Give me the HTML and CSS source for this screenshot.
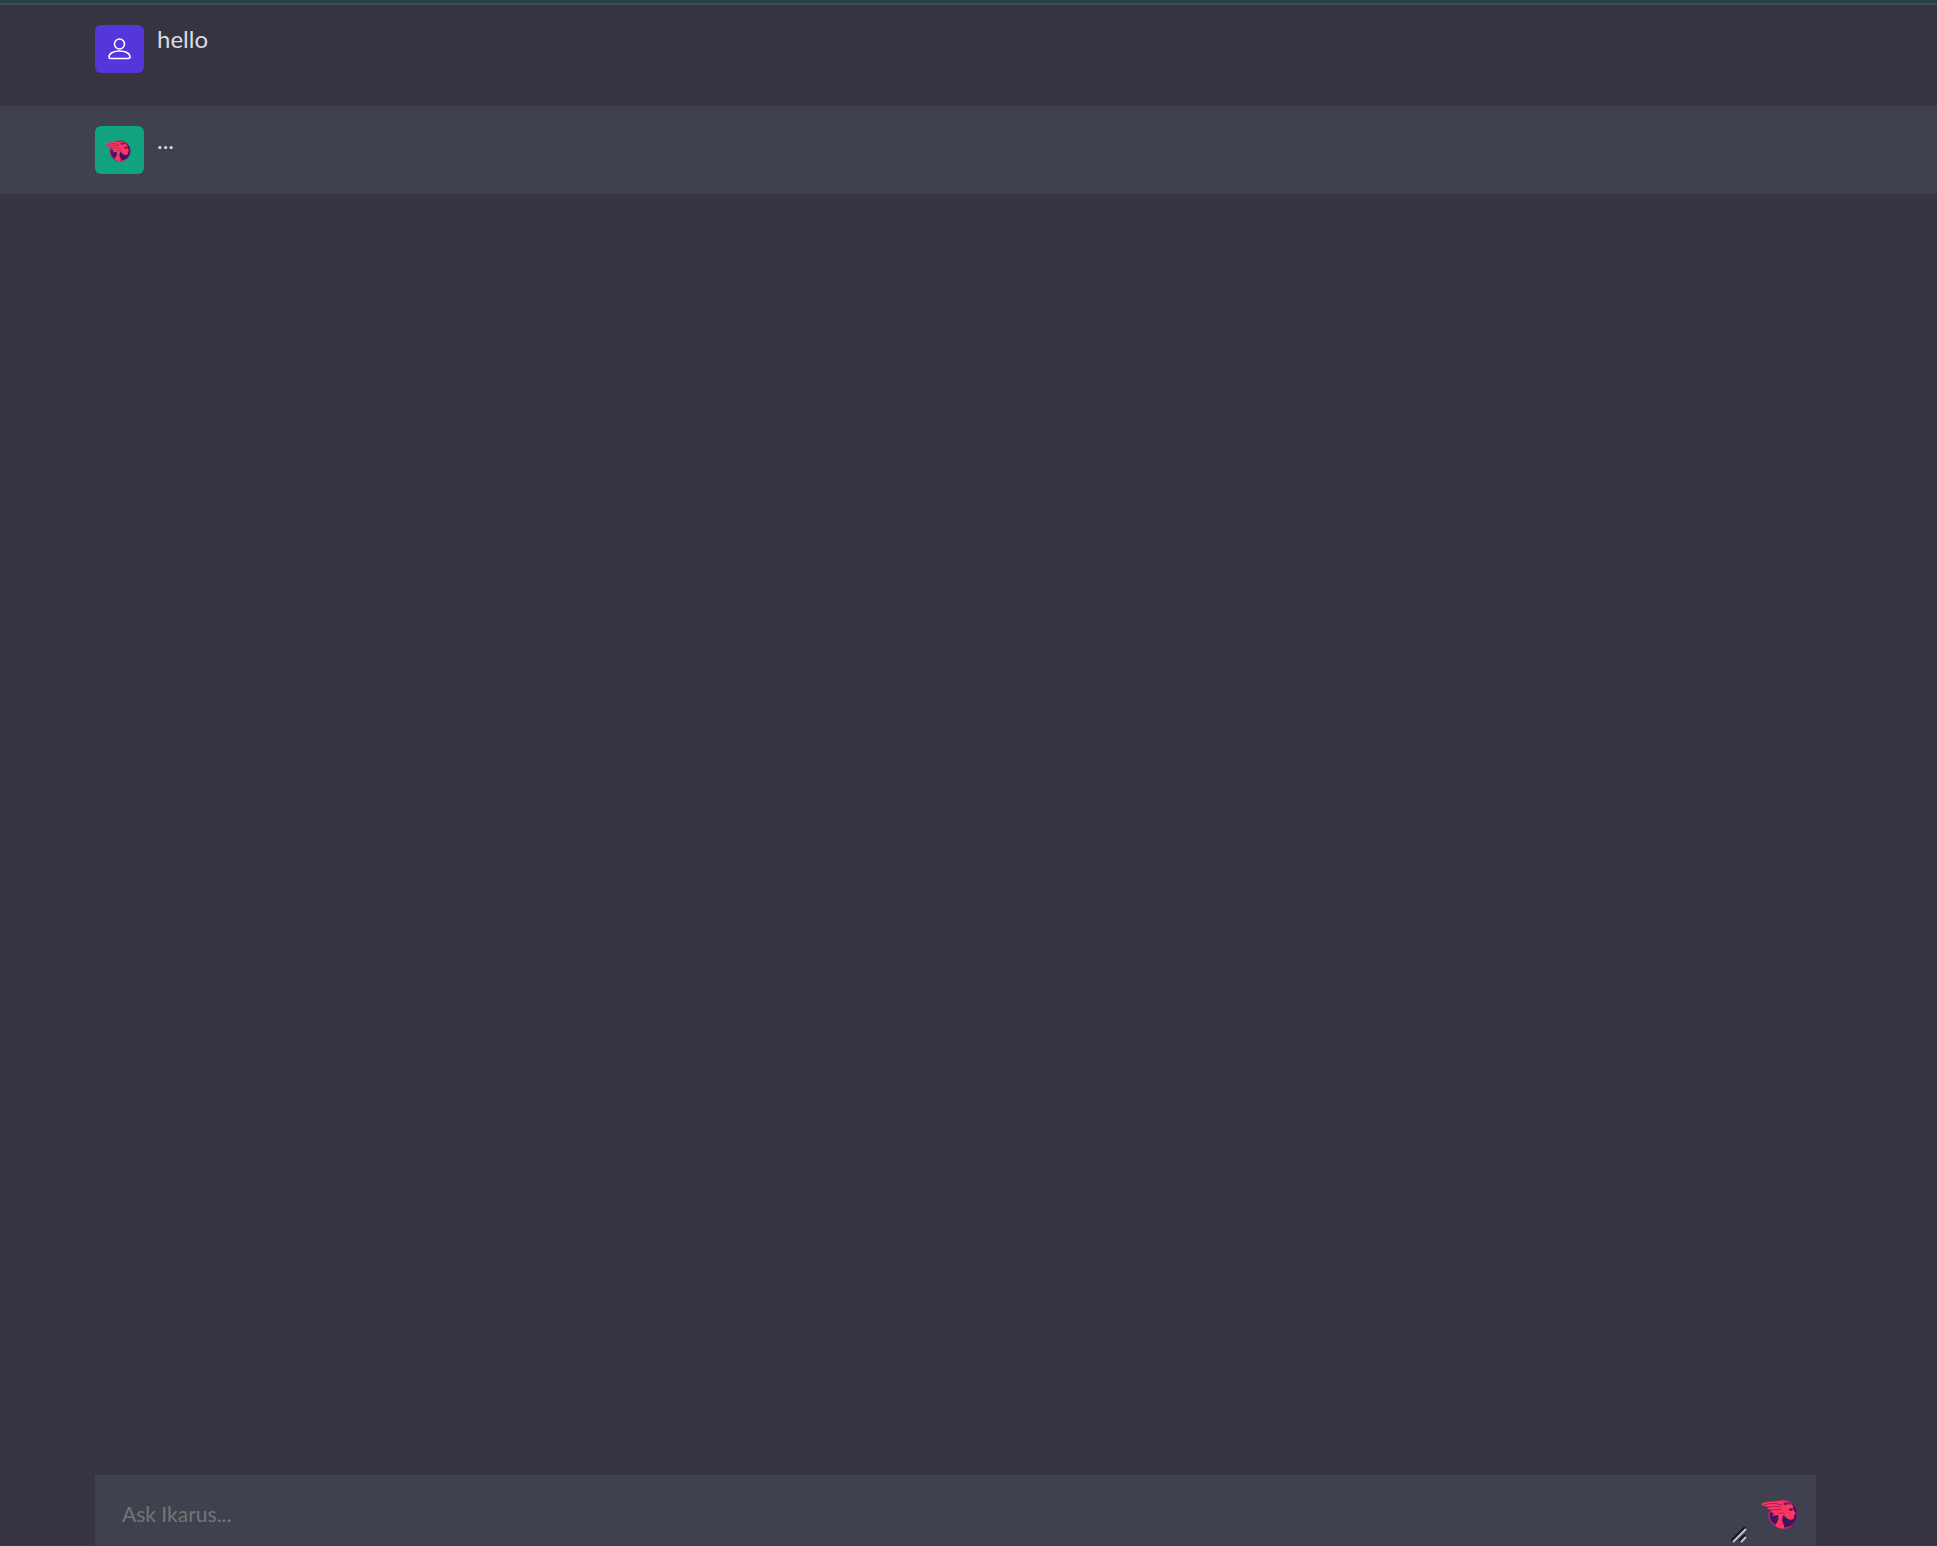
FILE: index.html
```html
<!DOCTYPE html>
<html lang="en">
<head>
<meta charset="utf-8">
<meta name="viewport" content="width=device-width, initial-scale=1">
<title>Ikarus</title>
<link rel="stylesheet" href="styles.css">
</head>
<body>
<svg class="sprite" aria-hidden="true">
  <symbol id="ikarus" viewBox="0 0 38 34">
    <circle cx="22" cy="17" r="14.500" fill="#3f1560" stroke="#8a2460" stroke-width="1"/>
    <path d="M8 15a14.500 14.500 0 0 0 22 14" fill="none" stroke="#e03060" stroke-width="1"/>
    <path d="M0 7C5 4 11 5 17 4c7-2 13 0 15 5l.500 4 2.500 4-2 1v3c-1 2-4 2-6 1l-5-4-1 5c0 3 3 5 2 8-3 1-6 0-9-3 3-3 4-6 3-10l-6 1 2-3-5-1 3-2-5-1 2-2-5-1z" fill="#ff3562"/>
    <path d="M3 8c6-2 12-2 18 0M5 11c6-2 10-2 15-1M8 15c5-3 8-3 13-2M17 17c3-2 5-1 7 1" fill="none" stroke="#8a2062" stroke-width=".8"/>
    <path d="M27 12l5-1-1 3-2-.500z" fill="#3f1560"/>
    <path d="M22 6c4-2 7-1 9 2-3-1-5-1-7 1z" fill="#74205f"/>
  </symbol>
</svg>
<main class="chat">
  <section class="messages">
    <article class="message">
      <div class="avatar avatar-user">
        <svg class="user-icon" viewBox="0 0 24 22" aria-label="User">
          <circle cx="11.500" cy="6" r="5"/>
          <path d="M1 19c0-4 5-6 10.500-6s10.500 2 10.500 6c0 1-1 1.500-2 1.500H3c-1 0-2-.500-2-1.500z"/>
        </svg>
      </div>
      <p class="text">hello</p>
    </article>
    <article class="message message-bot">
      <div class="avatar avatar-bot"><svg class="bot-icon" aria-label="Ikarus"><use href="#ikarus"/></svg></div>
      <p class="text">...</p>
    </article>
  </section>
  <form class="composer">
    <div class="field">
      <textarea class="prompt" name="prompt" rows="1" placeholder="Ask Ikarus..." aria-label="Ask Ikarus"></textarea>
      <svg class="grip" viewBox="0 0 16 16" aria-hidden="true">
        <path d="M0 14L14 0M8 14l6-6" stroke="#15151c" stroke-width="2"/>
        <path d="M2 15L15 2M10 15l5-5" stroke="#c4c4c8" stroke-width="2"/>
      </svg>
    </div>
    <button class="send" type="button" aria-label="Send"><svg class="send-icon"><use href="#ikarus"/></svg></button>
  </form>
</main>
</body>
</html>
```
FILE: styles.css
```css
* { box-sizing: border-box; }
body {
  margin: 0;
  background: #353440;
  color: #dcdce2;
  font-family: Lato, "Liberation Sans", sans-serif;
}
.sprite { display: none; }
.chat {
  display: flex;
  flex-direction: column;
  justify-content: space-between;
  min-height: 100vh;
  border-top: 3px solid #294044;
  border-bottom: 1px solid #43364a;
}
.messages { border-top: 2px solid #414a4e; }
.message {
  display: flex;
  gap: 13px;
  padding: 20px 95px 33px;
}
.message-bot { padding-bottom: 20px; background: #40414e; }
.avatar {
  display: flex;
  align-items: center;
  justify-content: center;
  width: 49px;
  height: 48px;
  border-radius: 6px;
}
.avatar-user { background: #5436da; }
.avatar-bot { padding: 2px 4px 0 0; background: #11a37f; }
.user-icon { width: 24px; height: 22px; fill: none; stroke: #fff; stroke-width: 1.5px; }
.bot-icon { width: 28px; height: 24px; }
.text { margin: 0; font-size: 24px; line-height: 28px; }
.composer {
  display: flex;
  margin: 0 121px 0 95px;
  background: #40414e;
}
.field { position: relative; display: flex; flex: 1; }
.prompt {
  flex: 1;
  height: 70px;
  padding: 25px 27px 17px;
  border: 0;
  outline: 0;
  background: transparent;
  color: #dcdce2;
  font: 21px/28px Lato, "Liberation Sans", sans-serif;
  resize: none;
  overflow: hidden;
}
.prompt::placeholder { color: #757575; }
.grip {
  position: absolute;
  right: 0;
  bottom: 2px;
  width: 16px;
  height: 16px;
  fill: none;
  pointer-events: none;
}
.send {
  display: flex;
  align-items: center;
  padding: 8px 17px 0 14px;
  border: 0;
  background: transparent;
  cursor: pointer;
}
.send-icon { width: 38px; height: 34px; }
```
